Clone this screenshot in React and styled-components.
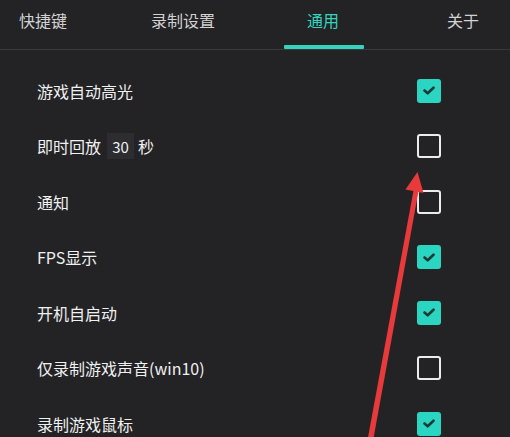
import React from "react";
import styled, { createGlobalStyle } from "styled-components";

const Global = createGlobalStyle`
  html, body { margin: 0; padding: 0; background: #232326; }
  body { font-family: "Noto Sans CJK SC", "Noto Sans", sans-serif; }
`;

const Page = styled.div`
  position: relative;
  width: 510px;
  height: 437px;
  overflow: hidden;
  background: #232326;
`;

const TabBar = styled.div`
  display: grid;
  grid-template-columns: repeat(4, 140px);
  margin-left: -27px;
  height: 49px;
  border-bottom: 1px solid #3a3a3e;
`;

const Tab = styled.div`
  position: relative;
  display: flex;
  justify-content: center;
  padding-top: 7px;
  font-size: 16px;
  line-height: 26px;
  color: ${(p) => (p.$active ? "#33d3bf" : "#d2d2d2")};
  &::after {
    content: "";
    display: ${(p) => (p.$active ? "block" : "none")};
    position: absolute;
    left: 31px;
    width: 80px;
    bottom: 0;
    height: 4px;
    border-radius: 1px;
    background: #33d3bf;
  }
`;

const List = styled.div`
  display: flex;
  flex-direction: column;
  padding-top: 13px;
`;

const Row = styled.div`
  display: flex;
  align-items: center;
  justify-content: space-between;
  height: 55.5px;
  padding: 0 69px 0 37px;
`;

const Label = styled.div`
  display: flex;
  align-items: center;
  gap: 5px;
  font-size: 16px;
  color: #f0f0f0;
`;

const NumBox = styled.span`
  display: inline-flex;
  align-items: center;
  justify-content: center;
  width: 27px;
  height: 26px;
  background: #2d2d31;
  font-size: 15px;
  color: #f0f0f0;
  margin: 0 -1px 0 1px;
`;

const Box = styled.div`
  width: 24px;
  height: 24px;
  box-sizing: border-box;
  border-radius: 3px;
  display: flex;
  align-items: center;
  justify-content: center;
  background: ${(p) => (p.$checked ? "#2ad6c2" : "transparent")};
  border: ${(p) => (p.$checked ? "none" : "2px solid #ececec")};
`;

const ArrowSvg = styled.svg`
  position: absolute;
  left: 0;
  top: 0;
  pointer-events: none;
`;

const Check = () => (
  <svg width="12" height="9" viewBox="0 0 12 9">
    <path d="M1.5 4.5 L4.7 7.3 L10.5 1.7" fill="none" stroke="#1b3a37" strokeWidth="2.6" strokeLinecap="round" strokeLinejoin="round" />
  </svg>
);

const rows = [
  { label: "游戏自动高光", checked: true },
  { label: "即时回放", num: "30", suffix: "秒", checked: false },
  { label: "通知", checked: false },
  { label: "FPS显示", checked: true },
  { label: "开机自启动", checked: true },
  { label: "仅录制游戏声音(win10)", checked: false },
  { label: "录制游戏鼠标", checked: true },
];

export default function App() {
  return (
    <Page>
      <Global />
      <TabBar>
        <Tab>快捷键</Tab>
        <Tab>录制设置</Tab>
        <Tab $active>通用</Tab>
        <Tab>关于</Tab>
      </TabBar>
      <List>
        {rows.map((r) => (
          <Row key={r.label}>
            <Label>
              {r.label}
              {r.num && <NumBox>{r.num}</NumBox>}
              {r.suffix}
            </Label>
            <Box $checked={r.checked}>{r.checked && <Check />}</Box>
          </Row>
        ))}
      </List>
      <ArrowSvg width="510" height="437" viewBox="0 0 510 437">
        <path d="M367.5 440 L413.6 190 L418.6 190.8 L373 441 Z" fill="#e8393b" />
        <path d="M417.5 172 L423.5 193 L405.5 189.5 Z" fill="#e8393b" />
      </ArrowSvg>
    </Page>
  );
}
